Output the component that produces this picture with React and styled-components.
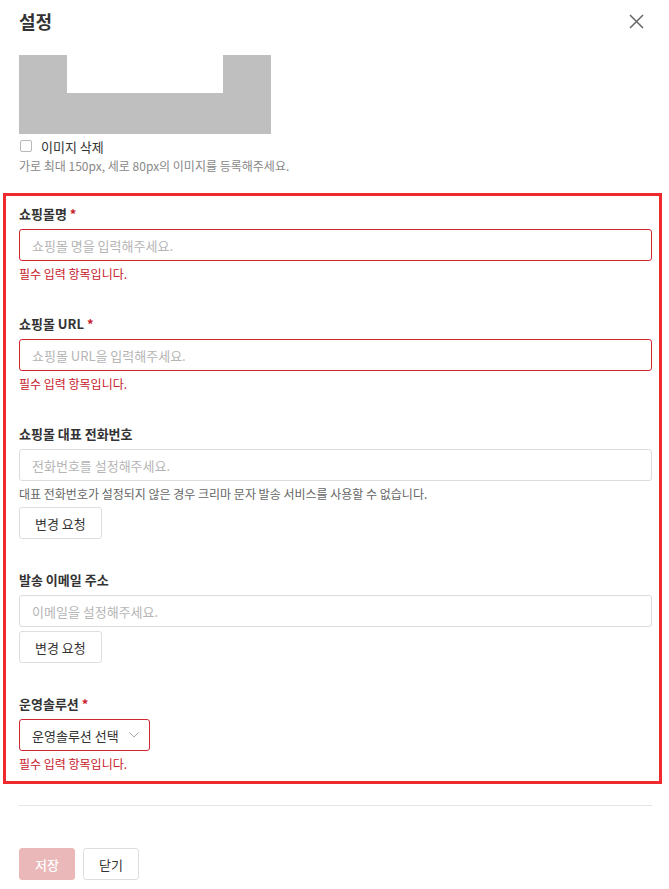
import React from "react";
import styled, { createGlobalStyle } from "styled-components";

const Global = createGlobalStyle`
  html, body { margin: 0; padding: 0; background: #fff; }
  body { font-family: "Noto Sans CJK KR", "Noto Sans", sans-serif; color: #333; }
  * { box-sizing: border-box; }
`;

const Page = styled.div`
  width: 669px;
  height: 889px;
  padding: 0 17px 0 19px;
  display: flex;
  flex-direction: column;
  overflow: hidden;
`;

const Header = styled.div`
  height: 42px;
  display: flex;
  align-items: center;
  justify-content: space-between;
`;

const Title = styled.h1`
  margin: 0;
  font-size: 18px;
  font-weight: 700;
  color: #333;
  line-height: 40px;
`;

const CloseBtn = styled.button`
  border: none;
  background: none;
  padding: 0;
  width: 17px;
  height: 17px;
  margin-right: 7px;
  display: flex;
  cursor: pointer;
`;

const ImageBox = styled.div`
  margin-top: 13px;
  width: 252px;
  height: 79px;
  display: flex;
`;

const CheckRow = styled.label`
  display: flex;
  align-items: center;
  gap: 9px;
  margin-top: 4px;
  height: 16px;
  font-size: 13px;
  color: #333;
`;

const CheckBox = styled.span`
  width: 12px;
  height: 12px;
  border: 1px solid #b8b8b8;
  border-radius: 2px;
  margin-left: 1px;
  background: #fff;
`;

const Hint = styled.div`
  font-size: 12px;
  line-height: 18px;
  color: ${(p) => p.$color || "#888"};
  margin-top: ${(p) => p.$mt || 4}px;
`;

const FormBox = styled.div`
  margin: 18px -10px 0 -16px;
  border: 3px solid #ef2a2f;
  padding: 9px 7px 8px 13px;
  display: flex;
  flex-direction: column;
  gap: 32px;
`;

const Field = styled.div`
  display: flex;
  flex-direction: column;
  align-items: flex-start;
`;

const Label = styled.div`
  font-size: 13px;
  font-weight: 700;
  line-height: 18px;
  color: #333;
  margin-bottom: 6px;
`;

const Star = styled.span`
  color: #c8202a;
  margin-left: 3px;
`;

const Input = styled.input`
  width: 100%;
  height: 32px;
  border: 1px solid ${(p) => (p.$error ? "#d02832" : "#dcdcdc")};
  border-radius: 3px;
  padding: 0 12px;
  font-family: inherit;
  font-size: 13px;
  color: #333;
  outline: none;
  &::placeholder { color: #b5b5b5; }
`;

const Error = styled.div`
  font-size: 12px;
  line-height: 18px;
  color: #c8202a;
  margin-top: 4px;
`;

const Button = styled.button`
  height: 32px;
  padding: 0 15px;
  border: 1px solid ${(p) => (p.$primary ? "#ebb8ba" : "#dedede")};
  background: ${(p) => (p.$primary ? "#ebb8ba" : "#fff")};
  color: ${(p) => (p.$primary ? "#fff" : "#333")};
  font-weight: ${(p) => (p.$primary ? 500 : 400)};
  border-radius: 3px;
  font-family: inherit;
  font-size: 13px;
  margin-top: ${(p) => p.$mt || 0}px;
  min-width: ${(p) => p.$minw || 0}px;
  cursor: pointer;
`;

const Select = styled.div`
  width: 131px;
  height: 32px;
  border: 1px solid #d02832;
  border-radius: 3px;
  padding: 0 10px 0 12px;
  display: flex;
  align-items: center;
  justify-content: space-between;
  font-size: 13px;
  color: #333;
`;

const Divider = styled.hr`
  margin: 21px 0 0;
  border: none;
  border-top: 1px solid #e4e4e4;
`;

const Footer = styled.div`
  display: flex;
  gap: 8px;
  margin-top: 42px;
`;

export default function App() {
  return (
    <>
      <Global />
      <Page>
        <Header>
          <Title>설정</Title>
          <CloseBtn aria-label="닫기">
            <svg width="17" height="17" viewBox="0 0 17 17">
              <path d="M2 2 L15 15 M15 2 L2 15" stroke="#666" strokeWidth="1.5" fill="none" />
            </svg>
          </CloseBtn>
        </Header>
        <ImageBox>
          <svg width="252" height="79" viewBox="0 0 252 79">
            <rect width="252" height="79" fill="#bfbfbf" />
            <rect x="48" y="0" width="156" height="38" fill="#fff" />
          </svg>
        </ImageBox>
        <CheckRow>
          <CheckBox />
          이미지 삭제
        </CheckRow>
        <Hint $mt={3}>가로 최대 150px, 세로 80px의 이미지를 등록해주세요.</Hint>

        <FormBox>
          <Field>
            <Label>쇼핑몰명<Star>*</Star></Label>
            <Input $error placeholder="쇼핑몰 명을 입력해주세요." />
            <Error>필수 입력 항목입니다.</Error>
          </Field>
          <Field>
            <Label>쇼핑몰 URL<Star>*</Star></Label>
            <Input $error placeholder="쇼핑몰 URL을 입력해주세요." />
            <Error>필수 입력 항목입니다.</Error>
          </Field>
          <Field>
            <Label>쇼핑몰 대표 전화번호</Label>
            <Input placeholder="전화번호를 설정해주세요." />
            <Hint $color="#666">대표 전화번호가 설정되지 않은 경우 크리마 문자 발송 서비스를 사용할 수 없습니다.</Hint>
            <Button $mt={4}>변경 요청</Button>
          </Field>
          <Field>
            <Label>발송 이메일 주소</Label>
            <Input placeholder="이메일을 설정해주세요." />
            <Button $mt={4}>변경 요청</Button>
          </Field>
          <Field>
            <Label>운영솔루션<Star>*</Star></Label>
            <Select>
              운영솔루션 선택
              <svg width="10" height="6" viewBox="0 0 10 6">
                <path d="M0.5 0.5 L5 5 L9.5 0.5" stroke="#aaa" strokeWidth="1" fill="none" />
              </svg>
            </Select>
            <Error>필수 입력 항목입니다.</Error>
          </Field>
        </FormBox>

        <Divider />
        <Footer>
          <Button $primary $minw={56}>저장</Button>
          <Button $minw={55}>닫기</Button>
        </Footer>
      </Page>
    </>
  );
}
